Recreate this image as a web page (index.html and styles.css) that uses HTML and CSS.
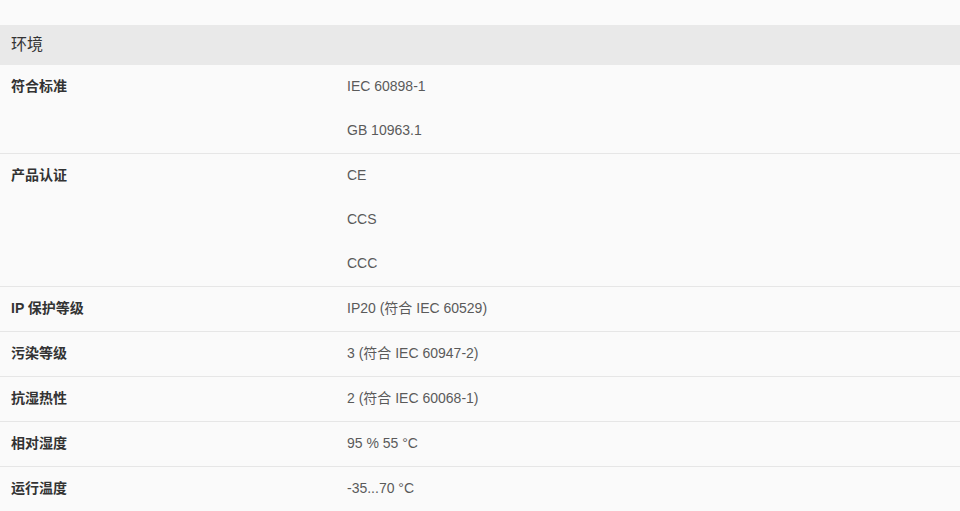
FILE: index.html
```html
<!DOCTYPE html>
<html lang="zh-CN">
<head>
<meta charset="utf-8">
<link rel="stylesheet" href="styles.css">
</head>
<body>
<div class="page">
  <div class="section-title">环境</div>
  <div class="spec">
    <div class="row">
      <div class="label">符合标准</div>
      <div class="values"><div class="val">IEC 60898-1</div><div class="val">GB 10963.1</div></div>
    </div>
    <div class="row">
      <div class="label">产品认证</div>
      <div class="values"><div class="val">CE</div><div class="val">CCS</div><div class="val">CCC</div></div>
    </div>
    <div class="row">
      <div class="label">IP 保护等级</div>
      <div class="values"><div class="val">IP20 (符合 IEC 60529)</div></div>
    </div>
    <div class="row">
      <div class="label">污染等级</div>
      <div class="values"><div class="val">3 (符合 IEC 60947-2)</div></div>
    </div>
    <div class="row">
      <div class="label">抗湿热性</div>
      <div class="values"><div class="val">2 (符合 IEC 60068-1)</div></div>
    </div>
    <div class="row">
      <div class="label">相对湿度</div>
      <div class="values"><div class="val">95 % 55 °C</div></div>
    </div>
    <div class="row">
      <div class="label">运行温度</div>
      <div class="values"><div class="val">-35...70 °C</div></div>
    </div>
  </div>
</div>
</body>
</html>
```
FILE: styles.css
```css
html, body {
  margin: 0;
  padding: 0;
  background: #fafafa;
}
body {
  font-family: "Liberation Sans", Arial, "Noto Sans CJK SC", sans-serif;
  font-size: 14px;
  color: #333;
}
.page {
  padding-top: 25px;
}
.section-title {
  height: 40px;
  line-height: 40px;
  background: #e9e9e9;
  padding-left: 11px;
  font-size: 16px;
  color: #333;
}
.row {
  display: grid;
  grid-template-columns: 336px 1fr;
  border-bottom: 1px solid #e6e6e6;
}
.row:last-child {
  border-bottom: none;
}
.label {
  padding-left: 11px;
  height: 44px;
  line-height: 43px;
  font-weight: bold;
  color: #333;
}
.values {
  padding-left: 11px;
}
.val {
  height: 44px;
  line-height: 43px;
  color: #5a5a5a;
}
```
